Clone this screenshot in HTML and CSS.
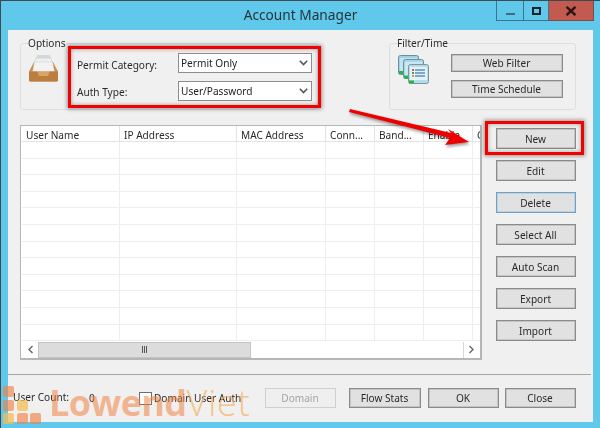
FILE: index.html
```html
<!DOCTYPE html>
<html lang="en">
<head>
<meta charset="utf-8">
<title>Account Manager</title>
<link rel="stylesheet" href="styles.css">
</head>
<body>
<div class="window">
  <header class="titlebar">
    <div class="title">Account Manager</div>
    <div class="controls">
      <div class="ctl ctl-min"><span class="min-bar"></span></div>
      <div class="ctl ctl-max"><span class="max-box"></span></div>
      <div class="ctl ctl-close"><svg width="12" height="10" viewBox="0 0 12 10"><path d="M1.5 .8 10.5 9.2M10.5 .8 1.5 9.2" stroke="#2a1512" stroke-width="2.4" fill="none"/></svg></div>
    </div>
  </header>
  <main class="client">
    <section class="top-row">
      <fieldset class="group group-options">
        <legend>Options</legend>
        <svg class="icon-tray" width="30" height="27" viewBox="0 0 30 27">
          <path d="M8 0h13l1 4H7z" fill="#d4d8db"/>
          <path d="M7 3h15l1.500 5h-18z" fill="#eceef0" stroke="#c4c8cb" stroke-width=".5"/>
          <path d="M5.500 7h18l2 10H3.500z" fill="#f2f2f2" stroke="#cfd0d1" stroke-width=".5"/>
          <path d="M5.500 6 0 16.500V25q0 1.500 1.500 1.500h26q1.500 0 1.500-1.500v-8.500L23.500 6l2 10.500H3.500z" fill="#cd9355"/>
          <path d="M0 16.500h8.500l1.500 4.500h9l1.500-4.500H29V25q0 1.500-1.500 1.500h-26Q0 26.500 0 25z" fill="#bb7e3f"/>
          <path d="M8.500 16.500h12l-1.500 4.500h-9z" fill="#d8a568"/>
        </svg>
        <div class="form">
          <label class="field-label">Permit Category:</label>
          <div class="combo"><span>Permit Only</span><svg width="9" height="6" viewBox="0 0 9 6"><path d="M.8.800 4.500 4.500 8.200.8" stroke="#555" stroke-width="1.600" fill="none"/></svg></div>
          <label class="field-label field-label-low">Auth Type:</label>
          <div class="combo"><span>User/Password</span><svg width="9" height="6" viewBox="0 0 9 6"><path d="M.8.800 4.500 4.500 8.200.8" stroke="#555" stroke-width="1.600" fill="none"/></svg></div>
        </div>
      </fieldset>
      <fieldset class="group group-filter">
        <legend>Filter/Time</legend>
        <svg class="icon-stack" width="31" height="29" viewBox="0 0 31 29">
          <rect x=".5" y=".5" width="20" height="19" rx="2" fill="#9fd2e6" stroke="#6d8f9b"/>
          <rect x="2" y="3" width="17" height="15" fill="#bfe6f2"/>
          <rect x="1" y="16" width="5" height="3" fill="#27b54a"/>
          <rect x="5.500" y="4.500" width="20" height="19" rx="2" fill="#a6d6e8" stroke="#6d8f9b"/>
          <rect x="7" y="7" width="17" height="15" fill="#c7e9f4"/>
          <rect x="6" y="20.500" width="5" height="3" fill="#27b54a"/>
          <rect x="10.500" y="9.500" width="20" height="19" rx="2" fill="#b4dbe8" stroke="#7f949b"/>
          <rect x="12" y="12" width="17" height="13" fill="#e4f3f8"/>
          <rect x="11" y="25.500" width="5" height="3" fill="#27b54a"/>
          <rect x="14" y="14" width="2" height="2" fill="#e2503a"/>
          <rect x="14" y="17" width="2" height="2" fill="#3fa84a"/>
          <rect x="14" y="20" width="2" height="2" fill="#e2993a"/>
          <path d="M17 15h10M17 18h10M17 21h10" stroke="#5b8fc0" stroke-width="1.300"/>
        </svg>
        <div class="filter-btns">
          <button class="btn btn-wide">Web Filter</button>
          <button class="btn btn-wide">Time Schedule</button>
        </div>
      </fieldset>
    </section>
    <section class="mid-row">
      <div class="list">
        <div class="row row-head">
          <div class="cell">User Name</div><div class="cell">IP Address</div><div class="cell">MAC Address</div><div class="cell">Conn...</div><div class="cell">Band...</div><div class="cell">Enable</div><div class="cell">G</div>
        </div>
        <div class="row"><div class="cell"></div><div class="cell"></div><div class="cell"></div><div class="cell"></div><div class="cell"></div><div class="cell"></div><div class="cell"></div></div>
        <div class="row"><div class="cell"></div><div class="cell"></div><div class="cell"></div><div class="cell"></div><div class="cell"></div><div class="cell"></div><div class="cell"></div></div>
        <div class="row"><div class="cell"></div><div class="cell"></div><div class="cell"></div><div class="cell"></div><div class="cell"></div><div class="cell"></div><div class="cell"></div></div>
        <div class="row"><div class="cell"></div><div class="cell"></div><div class="cell"></div><div class="cell"></div><div class="cell"></div><div class="cell"></div><div class="cell"></div></div>
        <div class="row"><div class="cell"></div><div class="cell"></div><div class="cell"></div><div class="cell"></div><div class="cell"></div><div class="cell"></div><div class="cell"></div></div>
        <div class="row"><div class="cell"></div><div class="cell"></div><div class="cell"></div><div class="cell"></div><div class="cell"></div><div class="cell"></div><div class="cell"></div></div>
        <div class="row"><div class="cell"></div><div class="cell"></div><div class="cell"></div><div class="cell"></div><div class="cell"></div><div class="cell"></div><div class="cell"></div></div>
        <div class="row"><div class="cell"></div><div class="cell"></div><div class="cell"></div><div class="cell"></div><div class="cell"></div><div class="cell"></div><div class="cell"></div></div>
        <div class="row"><div class="cell"></div><div class="cell"></div><div class="cell"></div><div class="cell"></div><div class="cell"></div><div class="cell"></div><div class="cell"></div></div>
        <div class="row"><div class="cell"></div><div class="cell"></div><div class="cell"></div><div class="cell"></div><div class="cell"></div><div class="cell"></div><div class="cell"></div></div>
        <div class="row"><div class="cell"></div><div class="cell"></div><div class="cell"></div><div class="cell"></div><div class="cell"></div><div class="cell"></div><div class="cell"></div></div>
        <div class="row"><div class="cell"></div><div class="cell"></div><div class="cell"></div><div class="cell"></div><div class="cell"></div><div class="cell"></div><div class="cell"></div></div>
        <div class="scrollbar">
          <div class="sb-arrow"><svg width="7" height="9" viewBox="0 0 7 9"><path d="M5.500 1 2 4.500 5.500 8" stroke="#666" stroke-width="1.400" fill="none"/></svg></div>
          <div class="sb-thumb"><span class="grip"></span><span class="grip"></span><span class="grip"></span></div>
          <div class="sb-track"></div>
          <div class="sb-arrow sb-right"><svg width="7" height="9" viewBox="0 0 7 9"><path d="M1.500 1 5 4.500 1.500 8" stroke="#666" stroke-width="1.400" fill="none"/></svg></div>
        </div>
      </div>
      <div class="side-btns">
        <button class="btn">New</button>
        <button class="btn">Edit</button>
        <button class="btn btn-focus">Delete</button>
        <button class="btn">Select All</button>
        <button class="btn">Auto Scan</button>
        <button class="btn">Export</button>
        <button class="btn">Import</button>
      </div>
    </section>
    <hr class="sep">
    <footer class="bottom-row">
      <span class="count-label">User Count:</span>
      <span class="count-value">0</span>
      <span class="check"></span>
      <span class="check-label">Domain User Auth</span>
      <button class="btn btn-disabled">Domain</button>
      <button class="btn btn-flow">Flow Stats</button>
      <button class="btn btn-foot">OK</button>
      <button class="btn btn-close">Close</button>
    </footer>
  </main>
</div>

<div class="mark mark-one"></div>
<div class="mark mark-two"></div>
<svg class="arrow" width="130" height="50" viewBox="0 0 130 50">
  <path class="arrow-fill" d="M2 0 103 24 100 20 121 33 97 36 102 29 1 3z"/>
</svg>

<div class="watermark">
  <div class="wm-logo">
    <span class="sq"></span><span></span><span></span>
    <span class="sq"></span><span class="sq sq-y"></span><span></span>
    <span class="sq sq-y"></span><span class="sq"></span><span class="sq"></span>
  </div>
  <span class="wm-a">Lowend</span><span class="wm-b">Viet</span>
</div>
</body>
</html>
```
FILE: styles.css
```css
* { box-sizing: border-box; }
html, body { margin: 0; padding: 0; }
body {
  position: relative;
  width: 600px;
  height: 428px;
  overflow: hidden;
  font-family: "Noto Sans", sans-serif;
  font-size: 10.1px;
  color: #2a2a2a;
}
.window {
  width: 600px;
  height: 428px;
  display: flex;
  flex-direction: column;
  background: #60c8ea;
  border-top: 1px solid #3f4a50;
  border-left: 1px solid #3f4a50;
  padding: 0 7px 6px 7px;
  filter: blur(.4px);
}
.titlebar {
  position: relative;
  height: 29px;
  flex: none;
}
.title {
  text-align: center;
  font-size: 13.7px;
  line-height: 28px;
  color: #24343c;
  margin-left: 0;
}
.controls {
  position: absolute;
  top: 0;
  left: 488px;
  display: flex;
  height: 20px;
}
.ctl {
  height: 20px;
  display: flex;
  align-items: center;
  justify-content: center;
  border: 1px solid #3d7488;
  border-top: 0;
}
.ctl-min { width: 28px; }
.ctl-max { width: 25px; border-left: 0; }
.ctl-close { width: 45px; border-left: 0; background: #c35a50; border-color: #7d4a45; }
.min-bar { width: 9px; height: 2px; margin-top: 6px; background: #3f6b7c; }
.max-box { width: 9px; height: 8px; border: 2px solid #14222a; }
.client {
  flex: 1;
  display: flex;
  flex-direction: column;
  background: #f0f0f0;
  padding: 7px 0 0 12px;
}
.top-row {
  display: flex;
  justify-content: space-between;
  padding-right: 17px;
  height: 73px;
  flex: none;
}
.group {
  margin: 0;
  height: 73px;
  border: 1px solid #dcdfe2;
  border-radius: 3px;
  display: flex;
  padding: 0;
}
.group legend {
  padding: 0;
  margin-left: 7px;
  line-height: 13px;
  background: #f0f0f0;
}
.group-options { width: 298px; }
.group-filter { width: 187px; }
.icon-tray { margin: 5px 0 0 8px; flex: none; }
.form {
  margin: 3px 0 0 18px;
  display: grid;
  grid-template-columns: 101px 134px;
  grid-auto-rows: 20px;
  row-gap: 8px;
  align-items: center;
}
.field-label { padding-top: 3px; }
.field-label-low { padding-top: 1px; }
.combo {
  height: 20px;
  display: flex;
  align-items: center;
  justify-content: space-between;
  padding: 0 3px 0 2px;
  background: #fff;
  border: 1px solid #8d8d8d;
  color: #222;
}
.icon-stack { margin: 5px 0 0 8px; flex: none; }
.filter-btns {
  margin: 4px 0 0 22px;
  display: flex;
  flex-direction: column;
  gap: 8px;
}
.btn {
  display: block;
  margin: 0;
  padding: 0 1px 0 0;
  width: 80px;
  height: 21px;
  background: #e1e1e1;
  border: 1px solid #8a8a8a;
  box-shadow: inset 0 0 0 .5px #aaa;
  font: inherit;
  color: #2a2a2a;
}
.btn-wide { width: 112px; height: 18px; line-height: 14px; }
.mid-row {
  display: flex;
  margin-top: 15px;
  flex: none;
  height: 235px;
}
.list {
  width: 462px;
  height: 235px;
  background: #fff;
  border: 1px solid #b4b7ba;
  border-width: 1px 2px 2px 1px;
  padding: 0 0 0 1px;
  overflow: hidden;
}
.row {
  display: grid;
  grid-template-columns: 98px 117px 89px 49px 49px 49px 9px;
  height: 16.6px;
  border-bottom: 1px solid #eeeeee;
}
.row-head {
  height: 16px;
  border-bottom: 1px solid #e4e4e4;
}
.cell {
  border-right: 1px solid #eeeeee;
  padding-left: 4px;
  line-height: 18px;
  white-space: nowrap;
  overflow: hidden;
}
.row-head .cell { border-right-color: #e2e2e2; }
.scrollbar {
  display: flex;
  height: 16px;
  margin-right: 1px;
  margin-top: .4px;
  background: #fff;
}
.sb-arrow {
  width: 16px;
  flex: none;
  display: flex;
  align-items: center;
  justify-content: center;
}
.sb-right { border-left: 1px solid #d8d8d8; }
.sb-thumb {
  width: 213px;
  flex: none;
  background: #dcdcdc;
  border: 1px solid #c4c4c4;
  display: flex;
  align-items: center;
  justify-content: center;
  gap: 1px;
}
.grip { width: 1px; height: 7px; background: #555; }
.sb-track { flex: 1; }
.side-btns {
  margin: 3px 0 0 14px;
  display: flex;
  flex-direction: column;
  gap: 11px;
}
.btn-focus { border-color: #6ea3c9; box-shadow: inset 0 0 0 .5px #9cc1dc; }
.sep {
  margin: 14px 2px 0 -12px;
  border: 0;
  height: 1px;
  flex: none;
  background: #a5a5a5;
}
.bottom-row {
  display: flex;
  align-items: center;
  margin: 13px 0 0 -7px;
  height: 20px;
  flex: none;
}
.bottom-row .btn { height: 20px; }
.count-label { width: 76px; padding-bottom: 2px; }
.count-value { width: 50px; }
.check {
  width: 13px;
  height: 13px;
  background: #fff;
  border: 1px solid #6f6f6f;
  flex: none;
}
.check-label { width: 113px; padding-left: 2px; }
.bottom-row .btn-disabled { width: 71px; background: #efefef; border-color: #cfcfcf; color: #a3a3a3; box-shadow: none; }
.btn-flow { width: 72px; margin-left: 13px; }
.btn-foot { width: 71px; margin-left: 7px; }
.btn-close { width: 71px; margin-left: 6px; }

.mark {
  position: absolute;
  border: 3px solid #f40000;
  box-shadow: 0 0 4px 1px rgba(0,0,0,.4), inset 0 0 4px rgba(0,0,0,.35);
  pointer-events: none;
}
.mark-one { left: 68px; top: 46px; width: 253px; height: 62px; }
.mark-two { left: 485px; top: 121px; width: 99px; height: 34px; }
.arrow {
  position: absolute;
  left: 348px;
  top: 109px;
  filter: drop-shadow(1px 2px 1.5px rgba(0,0,0,.4));
}
.arrow-fill { fill: #ee0000; }

.watermark {
  position: absolute;
  left: 3px;
  top: 382px;
  display: flex;
  align-items: flex-end;
  height: 42px;
  pointer-events: none;
}
.wm-logo {
  display: grid;
  grid-template-columns: repeat(3, 11px);
  grid-auto-rows: 11px;
  gap: 2.5px;
  width: 38px;
  margin-right: 8px;
  flex: none;
}
.sq { background: rgba(240,130,70,.65); border-radius: 2px; }
.sq-y { background: rgba(245,190,90,.75); }
.wm-a {
  font-family: "Open Sans", sans-serif;
  font-weight: 700;
  font-size: 36px;
  line-height: 42px;
  letter-spacing: -.6px;
  color: rgba(240,130,60,.55);
}
.wm-b {
  font-family: "Open Sans", sans-serif;
  font-weight: 300;
  font-size: 36px;
  line-height: 42px;
  letter-spacing: .8px;
  color: rgba(245,175,90,.7);
}
```
